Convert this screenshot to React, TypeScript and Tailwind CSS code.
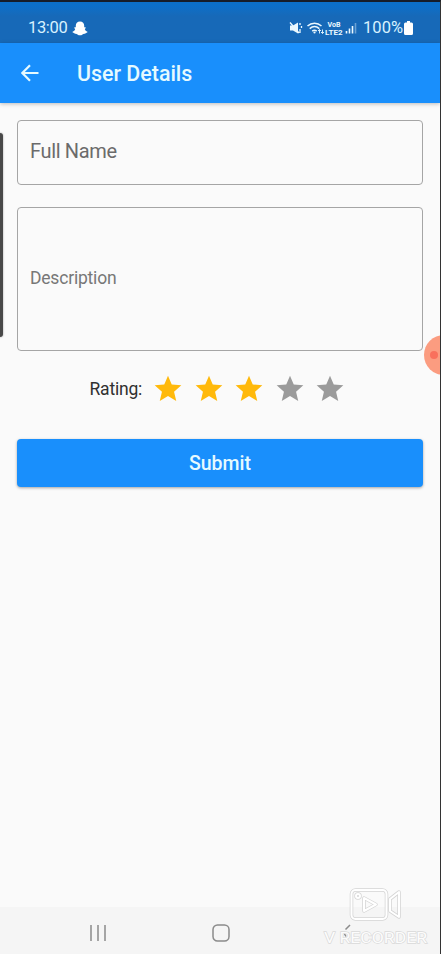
import React from 'react';

function Snapchat() {
  return (
    <svg className="ml-[4px] h-[15px] w-[16px]" viewBox="0 0 16 15" fill="#fff">
      <path d="M8 .5c2.700 0 4.200 1.800 4.200 4.100v1.700c.5.2 1.100 0 1.500.3.5.5-.2 1-.9 1.400.4 1.400 1.300 2.200 2.600 2.700.5.3.1.9-1.700 1.200l-.4.9c-1.300-.2-2-.1-2.800.6-1.500 1.200-3.500 1.200-5 0-.8-.7-1.500-.8-2.800-.6l-.4-.9C.5 11.600.1 11 .6 10.700 1.900 10.200 2.800 9.400 3.200 8c-.7-.4-1.400-.9-.9-1.400.4-.3 1-.1 1.500-.3V4.600C3.800 2.300 5.300.5 8 .5z" />
    </svg>
  );
}

function StatusIcons() {
  return (
    <svg className="h-[18px] w-[70px]" viewBox="0 0 70 18" fill="none" stroke="#eaf8ff">
      <path d="M1 6.500h3l5-3v11l-5-3H1z" fill="#eaf8ff" stroke="none" />
      <path d="M1 3.500l9 10.500M11 4v2M12.500 7v2M11 10v4" strokeWidth="1.300" />
      <path d="M18.500 7c4-3.700 10-3.700 14 0M20.700 9.600c2.900-2.500 6.700-2.500 9.600 0M23.200 12.100c1.500-1.200 3-1.200 4.500 0" strokeWidth="1.500" />
      <circle cx="25.500" cy="13.500" r="1.100" fill="#eaf8ff" stroke="none" />
      <path d="M30.500 14.500v-4M29 12l1.500-1.500 1.500 1.500M33.500 10.500v4M32 13l1.500 1.500 1.500-1.500" strokeWidth=".9" />
      <g fill="#eaf8ff" stroke="none" className="font-['Roboto',sans-serif] text-[6.500px] font-bold">
        <text x="38.500" y="7.500" textLength="13" lengthAdjust="spacingAndGlyphs">VoB</text>
        <text x="36" y="15.700" textLength="17.500" lengthAdjust="spacingAndGlyphs">LTE2</text>
      </g>
      <path d="M57.500 12v2.500M60.500 9.500v5M63.500 7v7.500" strokeWidth="1.600" />
      <path d="M66.500 4v10.500" strokeWidth="1.600" opacity=".4" />
    </svg>
  );
}

function Star({ filled }: { filled: boolean }) {
  return (
    <svg className={filled ? 'size-[32px] text-[#ffb90b]' : 'size-[32px] text-[#9b9b9b]'} viewBox="0 0 24 24" fill="currentColor">
      <path d="M12 17.270 18.180 21l-1.640-7.030L22 9.240l-7.190-.61L12 2 9.190 8.630 2 9.240l5.460 4.730L5.820 21z" />
    </svg>
  );
}

function WatermarkShape() {
  return (
    <>
      <rect x="31.500" y="7" width="35" height="29" rx="4" />
      <path d="M70 16v12l9 6V9zM44 15v13l12-6.500z" strokeLinejoin="round" />
      <circle cx="38" cy="13" r="2" />
    </>
  );
}

function Watermark() {
  return (
    <svg className="absolute top-[881px] left-[320px] h-[66px] w-[112px]" viewBox="0 0 112 66" fill="none">
      <g stroke="#d4d4d4" strokeWidth="3.500">
        <WatermarkShape />
      </g>
      <g stroke="#fff" strokeWidth="2">
        <WatermarkShape />
      </g>
      <text x="4" y="59.500" textLength="103" lengthAdjust="spacingAndGlyphs" className="font-['Roboto',sans-serif] text-[15.500px] font-normal" fill="#fcfcfc" stroke="#d9d9d9" strokeWidth="1.300" paintOrder="stroke">V RECORDER</text>
    </svg>
  );
}

export default function App() {
  return (
    <div className="relative flex h-[954px] w-[441px] flex-col overflow-hidden border-t-2 border-r border-t-[#161d29] border-r-[#333] bg-[#fafafa] font-['Roboto',sans-serif]">
      <div className="flex h-[41px] shrink-0 items-center bg-linear-to-b from-[#0c6fc8] from-10% to-[#1769b8] to-35% pt-[11px] pr-[27px] pl-[28px] text-[16.500px] leading-none text-[#d8f2ff]">
        <span className="w-[40px] pt-px whitespace-nowrap tracking-[-0.350px]">13:00</span>
        <Snapchat />
        <div className="ml-auto flex items-center">
          <StatusIcons />
          <span className="ml-[4px] pt-px">100%</span>
          <svg className="ml-px h-[14px] w-[9px]" viewBox="0 0 9 14" fill="#fff">
            <path d="M3 0h3v1.500h1.500Q9 1.500 9 3v9.500Q9 14 7.500 14h-6Q0 14 0 12.500V3q0-1.500 1.500-1.500H3z" />
          </svg>
        </div>
      </div>
      <header className="flex h-[59.500px] shrink-0 items-center bg-[#198ffc] pl-[21px] text-[#e6faff] shadow-[0_1px_4px_rgba(0,0,0,0.250)]">
        <svg className="h-[18px] w-[18px]" viewBox="0 0 18 18" fill="none" stroke="currentColor" strokeWidth="2.200">
          <path d="M17.500 9H1.500M9 1.200 1.300 9 9 16.800" />
        </svg>
        <h1 className="ml-[38px] pt-px text-[21.400px] leading-none font-medium">User Details</h1>
      </header>
      <main className="flex flex-col px-[17px] pt-[17.500px]">
        <div className="flex h-[65px] items-center rounded-[4px] border border-[#a5a5a5] px-[12px] pb-[4px] text-[20px] tracking-[-0.350px] text-[#6b6b6b]">Full Name</div>
        <div className="mt-[22px] flex h-[144px] items-center rounded-[4px] border border-[#a5a5a5] px-[12px] pb-[2px] text-[17.500px] tracking-[-0.200px] text-[#777]">Description</div>
        <div className="mt-[22px] flex h-[32px] items-center pl-[72.500px]">
          <span className="w-[62.500px] pt-px text-[17.500px] tracking-[-0.200px] text-[#303030]">Rating:</span>
          <div className="flex gap-[8.500px]">
            <Star filled={true} />
            <Star filled={true} />
            <Star filled={true} />
            <Star filled={false} />
            <Star filled={false} />
          </div>
        </div>
        <button className="mt-[34px] h-[48px] rounded-[4px] bg-[#198ffc] pt-px text-[19.500px] font-medium text-[#e6faff] shadow-[0_1px_3px_rgba(0,0,0,0.350)]">Submit</button>
      </main>
      <nav className="mt-auto flex h-[47px] bg-[#f5f5f5] pt-[17px] pl-[89px]">
        <svg className="h-[18px] w-[18px]" viewBox="0 0 18 18" stroke="#8b8b8b" strokeWidth="1.500">
          <path d="M2 1v16M9 1v16M16 1v16" />
        </svg>
        <svg className="ml-[105px] h-[18px] w-[18px]" viewBox="0 0 18 18" fill="none" stroke="#8b8b8b" strokeWidth="1.500">
          <rect x="1" y="1" width="16" height="16" rx="4.500" />
        </svg>
        <svg className="ml-[112px] h-[18px] w-[10px]" viewBox="0 0 10 18" fill="none" stroke="#8b8b8b" strokeWidth="1.500">
          <path d="M8 1 3.500 5.500M2 9l2 3.500" />
        </svg>
      </nav>
      <div className="absolute top-[131px] left-[-4px] h-[204px] w-[7px] rounded-[3px] bg-[#484848] shadow-[0_0_2px_#999]" />
      <div className="absolute top-[333px] left-[424px] size-[40px] rounded-full bg-[#fb9c80]">
        <div className="absolute top-[16px] left-[6px] size-[8px] rounded-full bg-[#f9705c]" />
      </div>
      <Watermark />
    </div>
  );
}
